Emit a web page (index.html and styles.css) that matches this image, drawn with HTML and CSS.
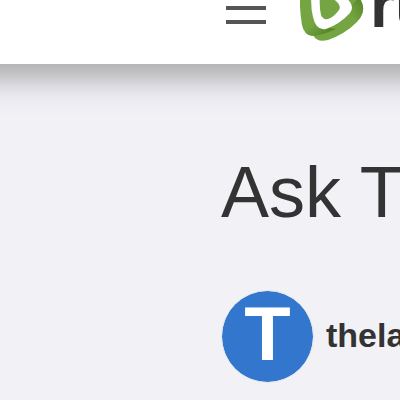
FILE: index.html
```html
<!DOCTYPE html>
<html lang="en">
<head>
<meta charset="utf-8">
<title>Ask T</title>
<link rel="stylesheet" href="styles.css">
</head>
<body>
<header class="site-header">
  <button class="menu" type="button" aria-label="Menu"><span class="bar"></span><span class="bar"></span></button>
  <a class="logo" href="#">
    <svg class="mark" viewBox="300 -22 64 64" aria-hidden="true">
      <defs>
        <linearGradient id="left" gradientUnits="userSpaceOnUse" x1="301" y1="12" x2="322" y2="38"><stop offset=".5" stop-color="#74a542"/><stop offset="1" stop-color="#568526"/></linearGradient>
        <linearGradient id="right" gradientUnits="userSpaceOnUse" x1="361" y1="3" x2="340" y2="18"><stop offset="0" stop-color="#5b8b2b"/><stop offset=".6" stop-color="#74a542"/></linearGradient>
      </defs>
      <path fill="#74a542" d="M313 35Q317 43 328 40Q345 34 357 22Q365 14 362 4L346 -15L322 -20L305 -8L306 30Z"/>
      <path fill="url(#right)" d="M359 -3Q367 8 360 18Q353 23 338 30L328 31L345 13Z"/>
      <path fill="url(#left)" d="M300 -14Q299 8 302 25Q304 35 312 36Q323 35 336 29L325 27L314 5L315 -12Z"/>
      <path fill="#fff" d="M312 -9Q310 5 313 17Q316 31 326 29Q340 24 350 13Q354 8 350 2Q338 -12 323 -15Q314 -17 312 -9Z"/>
      <path fill="#74a542" d="M320 -5Q319 6 321 15Q323 20 328 19Q334 17 339 10Q341 7 338 3Q332 -3 326 -6Q322 -8 320 -5Z"/>
    </svg>
    <span class="wordmark">rumble</span>
  </a>
</header>
<main class="content">
  <h1 class="title">Ask T</h1>
  <a class="author" href="#"><span class="avatar">T</span><span class="name">thela</span></a>
</main>
</body>
</html>
```
FILE: styles.css
```css
* { box-sizing: border-box; }
body {
  margin: 0;
  min-height: 100vh;
  overflow: hidden;
  background: #f2f1f6;
  color: #333;
  font-family: "Liberation Sans", Arial, sans-serif;
}
a { color: inherit; text-decoration: none; }
.site-header {
  display: flex;
  align-items: flex-start;
  gap: 34px;
  height: 64px;
  padding-left: 226px;
  background: #fff;
}
.menu {
  display: flex;
  flex: none;
  flex-direction: column;
  gap: 10px;
  width: 40px;
  margin: 0;
  padding: 6px 0;
  border: 0;
  background: none;
}
.bar { width: 100%; height: 4px; background: #555; }
.logo {
  display: flex;
  flex: none;
  gap: 6px;
  margin-top: -22px;
}
.mark { display: block; width: 64px; height: 64px; }
.wordmark {
  color: #333;
  font-size: 64px;
  font-weight: 700;
  line-height: 54px;
}
.content {
  padding: 84px 0 0 221px;
  background: linear-gradient(#b5b4b8, #c4c4c6 10px, #dcdbe0 22px, #ebeaf0 34px, #f2f1f6 52px);
}
.title {
  margin: 0;
  font-size: 72px;
  font-weight: 400;
  line-height: 88px;
  white-space: nowrap;
}
.author {
  display: flex;
  align-items: center;
  gap: 12px;
  margin-top: 54px;
}
.avatar {
  flex: none;
  width: 93px;
  height: 93px;
  border: 1px solid #e6e8ee;
  border-radius: 50%;
  background: #3277cd;
  background-clip: padding-box;
  color: #fff;
  font-size: 76px;
  font-weight: 700;
  line-height: 86px;
  text-align: center;
}
.name { font-size: 34px; font-weight: 700; line-height: 40px; padding-bottom: 4px; }
```
